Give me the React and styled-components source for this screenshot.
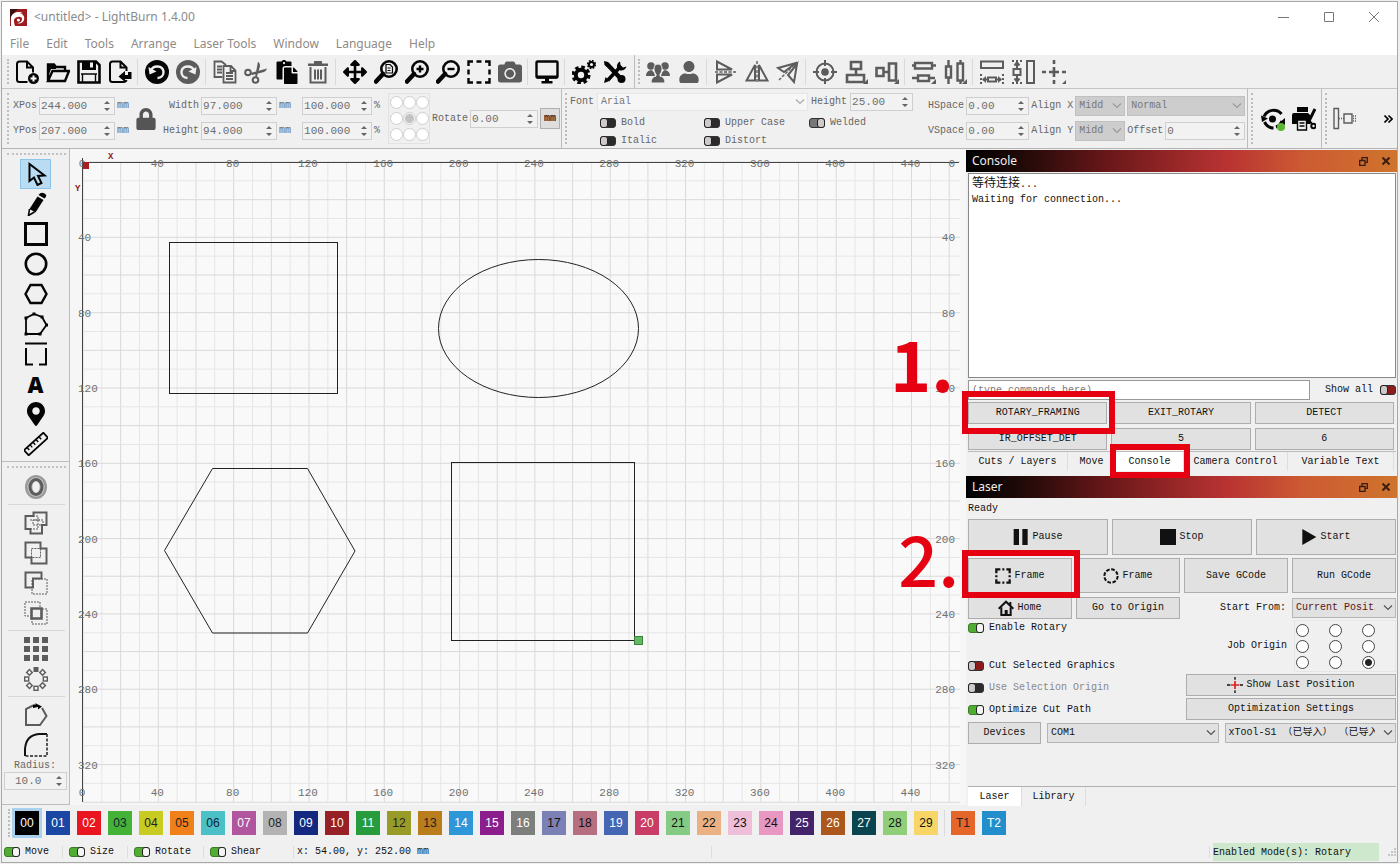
import React from 'react';
import styled, { createGlobalStyle, css } from 'styled-components';
import { FaCamera, FaArrowsAlt, FaUser, FaMapMarkerAlt, FaLock, FaPaste } from 'react-icons/fa';

const GlobalStyle = createGlobalStyle`
  *, *::before, *::after {
    box-sizing: border-box;
  }

  body {
    margin: 0;
    background-color: #f0f0f0;
    font-family: "Liberation Mono", "Noto Sans CJK SC", monospace;
    font-size: 10px;
    line-height: 12px;
    color: #111;
  }

  button, input, select {
    margin: 0;
    font: inherit;
    color: inherit;
  }
`;

const Window = styled.div`
  display: flex;
  flex-direction: column;
  min-height: calc(100vh - 2px);
  margin: 1px 2px 1px 1px;
  border: 1px solid #a8a8a8;
  background-color: #f0f0f0;
`;

/* title bar and menu */

const TitleBar = styled.header`
  display: flex;
  align-items: center;
  gap: 7px;
  height: 32px;
  padding: 0 17px 2px 8px;
  background-color: #fff;
  font-family: "Noto Sans", sans-serif;
  font-size: 12px;
  color: #8a8a8a;
`;

const WindowTitle = styled.h1`
  flex: 1;
  margin: 0;
  font-size: 12px;
  font-weight: 400;
`;

const WindowButtons = styled.div`
  display: flex;
  gap: 33px;
`;

const PlainButton = styled.button`
  display: flex;
  align-items: center;
  justify-content: center;
  padding: 0;
  border: none;
  background: none;
  color: ${({ color }) => color || '#777'};
`;

const MenuBar = styled.nav`
  display: flex;
  gap: 17px;
  height: 21px;
  padding: 0 8px;
  background-color: #fff;
  font-family: "Noto Sans", sans-serif;
  font-size: 12px;
  line-height: 20px;

  a {
    color: #8f8a86;
    text-decoration: none;
  }
`;

/* toolbars */

const Toolbar = styled.div`
  display: flex;
  align-items: center;
  height: 34px;
  padding-left: 5px;
  border-bottom: 1px solid #c4c4c4;
  overflow: hidden;
`;

const Handle = styled.div`
  flex: none;
  align-self: stretch;
  width: 4px;
  margin: 4px 0;
  border-left: 2px dotted #bdbdbd;
`;

const Separator = styled.div`
  flex: none;
  width: 2px;
  height: 26px;
  margin: 0 2px;
  border-left: 1px solid #dadada;
`;

const GroupEnd = styled.div`
  flex: none;
  align-self: stretch;
  width: 4px;
  margin-left: ${({ $before }) => $before || 0}px;
  border-left: 1px solid #bcbcbc;
`;

const ToolButton = styled(PlainButton)`
  flex: none;
  width: 31px;
  height: 30px;
  color: ${({ $dim }) => ($dim ? '#5c5c5c' : '#050505')};

  ${({ $active }) => $active && css`
    background-color: #b9dcf3;
    box-shadow: inset 0 0 0 1px #8cc4ea;
  `}
`;

const LetterIcon = styled.span`
  font-family: "Open Sans", sans-serif;
  font-size: 22px;
  font-weight: 800;
  line-height: 30px;
`;

const PropertyBar = styled.div`
  display: flex;
  align-items: stretch;
  height: 60px;
  padding-left: 5px;
  border-bottom: 1px solid #b4b4b4;
  overflow: hidden;
  color: #666;
`;

const PropertyGroup = styled.div`
  display: flex;
  flex: ${({ $grow }) => ($grow ? '1' : 'none')};
  align-items: center;
  gap: ${({ $gap = 4 }) => $gap}px;
  padding: 0 ${({ $right }) => $right || 0}px 0 ${({ $left }) => $left || 0}px;
`;

const FieldStack = styled.div`
  display: grid;
  grid-template-columns: ${({ $cols }) => $cols || 'auto auto'};
  grid-auto-rows: 18px;
  align-items: center;
  gap: 7px 2px;
`;

const FieldLabel = styled.label`
  text-align: right;
  white-space: pre;
`;

const SpinBox = styled.div`
  display: flex;
  align-items: center;
  width: ${({ $width }) => ($width ? `${$width}px` : '100%')};
  height: 18px;
  padding-right: 3px;
  border: 1px solid #cfcfcf;
  background-color: #f2f2f2;

  input {
    flex: 1;
    min-width: 0;
    width: 10px;
    padding: 0 0 0 1px;
    border: none;
    outline: none;
    background: none;
    font-size: 11px;
    color: #6e6e6e;
  }
`;

const SelectFrame = styled.div`
  position: relative;
  display: flex;
  width: ${({ $width }) => ($width ? `${$width}px` : '100%')};
  height: ${({ $height }) => $height || 20}px;

  select {
    flex: 1;
    min-width: 0;
    padding: 0 20px 0 3px;
    border: 1px solid ${({ $edge }) => $edge || '#b5b5b5'};
    border-radius: 0;
    outline: none;
    appearance: none;
    background-color: ${({ $fill }) => $fill || '#e1e1e1'};
    color: ${({ $ink }) => $ink || '#111'};
  }

  svg {
    position: absolute;
    top: 50%;
    right: 3px;
    margin-top: -3px;
    pointer-events: none;
  }
`;

const ToggleLabel = styled.label`
  display: flex;
  align-items: center;
  gap: 5px;
  height: 12px;
  white-space: pre;
  color: ${({ $ink }) => $ink || '#111'};
`;

const TOGGLE_COLORS = {
  green: '#4fae32',
  red: '#8c1c1c',
  dark: '#2b2b2b',
  gray: '#777',
};

const ToggleInput = styled.input`
  position: relative;
  flex: none;
  width: 16px;
  height: 10px;
  border: 1px solid ${({ $tone }) => ($tone === 'green' ? '#3b7a2b' : '#333')};
  border-radius: 3px;
  appearance: none;
  background-color: ${({ $tone }) => TOGGLE_COLORS[$tone]};

  &::before {
    content: "";
    position: absolute;
    top: -1px;
    left: ${({ $knob }) => ($knob === 'right' ? 7 : -1)}px;
    width: 8px;
    height: 10px;
    border: 1px solid #222;
    border-radius: 3px;
    background-color: ${({ $tone }) => ($tone === 'green' ? '#f4f4f4' : '#cfcaca')};
  }
`;

const AnchorGrid = styled.div`
  display: grid;
  grid-template-columns: repeat(3, 13px);
  gap: 3px 0;
  margin-left: 2px;
  padding: 2px 0 2px 1px;
  border: 1px solid #e2e2e2;
`;

const AnchorRadio = styled.input`
  width: 13px;
  height: 13px;
  margin: 0;
  border: 1px solid #cfcfcf;
  border-radius: 50%;
  appearance: none;
  background-color: #fff;

  &:checked {
    background: radial-gradient(#c2c2c2 0 4px, #f4f4f4 5px);
  }
`;

const UnitButton = styled.button`
  width: 20px;
  height: 21px;
  padding: 0;
  border: 1px solid #b0b0b0;
  background-color: #dedede;
  font-weight: 700;
  font-size: 10px;
  color: #222;
`;

const FontForm = styled.div`
  display: flex;
  flex-direction: column;
  gap: 6px;
  padding-top: 2px;
`;

const FontRow = styled.div`
  display: flex;
  align-items: center;
  gap: 3px;
  height: 18px;
`;

const ToggleGrid = styled.div`
  display: grid;
  grid-template-columns: 104px 105px auto;
  gap: 6px 0;
  padding-left: 30px;
`;

/* workspace */

const Workspace = styled.main`
  display: flex;
  flex: 1;
`;

const ToolColumn = styled.aside`
  display: flex;
  flex: none;
  flex-direction: column;
  width: 68px;
  border-right: 1px solid #bdbdbd;
  border-bottom: 1px solid #bdbdbd;
`;

const ToolSection = styled.section`
  display: flex;
  flex-direction: column;
  align-items: center;
  padding-top: 4px;
  padding-bottom: ${({ $bottom }) => $bottom || 0}px;
  border-bottom: ${({ $bottom }) => ($bottom ? '1px solid #bdbdbd' : 'none')};
`;

const DottedRule = styled.div`
  align-self: stretch;
  margin: 0 3px 4px 5px;
  border-top: 2px dotted #c2c2c2;
`;

const ColumnRule = styled.div`
  align-self: stretch;
  height: 1px;
  margin: 2px 4px 3px 6px;
  background-color: #d8d8d8;
`;

const RadiusField = styled.div`
  display: flex;
  flex-direction: column;
  gap: 1px;
  width: 100%;
  padding: 0 2px;
  color: #666;

  label {
    padding-left: 10px;
    line-height: 11px;
  }

  input {
    padding-left: 10px;
  }
`;

const CanvasArea = styled.div`
  flex: 1;
  min-width: 0;
  overflow: hidden;
  background-color: #f6f6f6;

  svg {
    display: block;
    width: 100%;
    height: 100%;
  }

  text {
    font-family: "Liberation Mono", monospace;
    font-size: 11px;
    fill: #707070;
  }

  .axis {
    font-size: 9px;
    font-weight: 700;
    fill: #8c2020;
  }
`;

/* docks */

const DockColumn = styled.aside`
  display: flex;
  flex: 0 0 431px;
  flex-direction: column;
  padding-top: 1px;
`;

const DockTitle = styled.h2`
  display: flex;
  align-items: center;
  gap: 14px;
  height: 22px;
  margin: 0;
  padding: 0 7px 0 6px;
  background: linear-gradient(90deg, #000 0%, #200a08 13%, #6a1719 33%, #b83232 60%, #cc5a32 78%, #cf742d 100%);
  font-family: "Noto Sans", sans-serif;
  font-size: 12px;
  font-weight: 400;
  color: #eee;

  span {
    flex: 1;
  }
`;

const DockBody = styled.div`
  display: flex;
  flex: ${({ $fill }) => ($fill ? '1' : 'none')};
  flex-direction: column;
  padding: 0 1px 0 2px;
`;

const ConsoleLog = styled.div`
  height: 205px;
  margin: 1px 0 2px;
  padding: 3px;
  border: 1px solid #888;
  background-color: #fff;
  line-height: 15px;

  p {
    margin: 0;
  }

  span {
    font-size: 12px;
  }
`;

const CommandRow = styled.div`
  display: flex;
  align-items: center;
  justify-content: space-between;
  height: 20px;
  margin-bottom: 2px;
`;

const CommandInput = styled.input`
  flex: 0 0 80%;
  height: 20px;
  padding: 0 3px;
  border: 1px solid #999;
  outline: none;
  background-color: #fff;

  &::placeholder {
    color: #777;
    opacity: 1;
  }
`;

const ReverseToggle = styled(ToggleLabel)`
  flex-direction: row-reverse;
  gap: 7px;
`;

const ButtonGrid = styled.div`
  display: grid;
  grid-template-columns: repeat(${({ $cols }) => $cols}, minmax(0, 1fr));
  gap: 4px;
  align-items: center;
  margin-right: ${({ $right }) => $right || 0}px;
  margin-bottom: ${({ $after }) => $after || 4}px;
`;

const PanelButton = styled.button`
  display: flex;
  align-items: center;
  justify-content: center;
  gap: 3px;
  width: 100%;
  height: ${({ $height }) => $height || 22}px;
  padding: 0;
  border: 1px solid #adadad;
  background-color: #e1e1e1;
  white-space: pre;
`;

const Marked = styled.div`
  position: relative;

  &::after {
    content: "";
    position: absolute;
    z-index: 2;
    inset: ${({ $inset }) => $inset};
    border: 6px solid #e50012;
    pointer-events: none;
  }
`;

const StepNumber = styled.strong`
  position: absolute;
  z-index: 2;
  top: ${({ $top }) => $top}px;
  right: 100%;
  padding-right: ${({ $space }) => $space}px;
  font-family: "Noto Sans CJK SC", sans-serif;
  font-size: 70px;
  font-weight: ${({ $weight }) => $weight};
  line-height: 70px;
  color: #e50012;
`;

const TabRow = styled.div`
  display: flex;
  height: 20px;
  margin-bottom: 5px;
  border-top: 1px solid #bbb;
`;

const TabButton = styled.button`
  width: ${({ $width }) => $width || '100%'};
  height: 19px;
  padding: 0;
  border: none;
  border-right: 1px solid #ddd;
  background-color: ${({ $active }) => ($active ? '#fff' : 'transparent')};
  white-space: pre;
`;

const TabSlot = styled(Marked)`
  flex: none;
  width: 68px;
`;

const Ready = styled.p`
  margin: 5px 0 4px;
`;

const AlignRight = styled.label`
  grid-column: 3;
  padding-right: 2px;
  text-align: right;
`;

const LaserOptions = styled.div`
  display: flex;
  justify-content: space-between;
  margin-bottom: 2px;
`;

const OptionList = styled.div`
  display: flex;
  flex-direction: column;
  gap: 10px;
  padding-top: 2px;

  label:nth-child(2) {
    margin-top: 16px;
  }
`;

const OptionSide = styled.div`
  display: flex;
  flex-direction: column;
  gap: 2px;
  width: 210px;
`;

const JobOrigin = styled.fieldset`
  display: flex;
  align-items: center;
  justify-content: flex-end;
  gap: 7px;
  margin: 0;
  padding: 0;
  border: none;
`;

const JobOriginGrid = styled.div`
  display: grid;
  grid-template-columns: repeat(3, 33px);
  gap: 3px 0;
  padding: 3px 0 2px 1px;
  border: 1px solid #e6e6e6;
`;

const JobRadio = styled.input`
  width: 13px;
  height: 13px;
  border: 1px solid #444;
  border-radius: 50%;
  appearance: none;
  background-color: #fff;

  &:checked {
    background: radial-gradient(#222 0 3px, #fff 4px);
  }
`;

const DeviceRow = styled.div`
  display: grid;
  grid-template-columns: 73px minmax(0, 1fr) minmax(0, 1fr);
  gap: 6px;
  align-items: center;
`;

const BottomTabs = styled.div`
  display: flex;
  height: 19px;
  margin-top: auto;
  border-top: 1px solid #b0b0b0;
`;

/* palette and status */

const Palette = styled.div`
  display: flex;
  align-items: center;
  height: 36px;
  padding-left: 6px;
`;

const Swatch = styled.button`
  flex: none;
  width: 24px;
  height: 24px;
  margin: 0 4px 0 3px;
  padding: 0;
  border: none;
  outline: ${({ $active }) => ($active ? '3px solid #a9d1ee' : 'none')};
  background-color: ${({ $fill }) => $fill};
  font-family: "Liberation Sans", sans-serif;
  font-size: 12px;
  color: ${({ $ink }) => $ink || '#fff'};
`;

const StatusBar = styled.footer`
  display: flex;
  align-items: center;
  height: 21px;
  padding-left: 2px;
`;

const StatusCell = styled.div`
  flex: ${({ $grow }) => ($grow ? '1' : 'none')};
  width: ${({ $width }) => ($width ? `${$width}px` : 'auto')};
  margin-right: ${({ $after = 6 }) => $after}px;
  border-right: 1px solid #ddd;
  white-space: pre;
`;

const ModeBadge = styled.span`
  width: 166px;
  height: 18px;
  margin-right: 8px;
  background-color: #cde8cc;
  line-height: 20px;
  white-space: pre;
`;

/* drawings */

const line = { fill: 'none', stroke: 'currentColor', strokeWidth: 2 };
const thin = { fill: 'none', stroke: 'currentColor', strokeWidth: 1.4 };
const bold = { fill: 'none', stroke: 'currentColor', strokeWidth: 3 };

const DRAWINGS = {
  newFile: (
    <>
      <path {...line} d="M12.500 22H4.500Q2 22 2 19.500V4Q2 1.500 4.500 1.500H12l6 6V12.500M12 1.500v6h6" />
      <circle cx="18.500" cy="18.500" r="5.500" fill="currentColor" />
      <path d="M18.500 15.500v6M15.500 18.500h6" stroke="#fff" strokeWidth="2" />
    </>
  ),
  open: (
    <>
      <path {...line} d="M2 20V4.500h6l2 2.500h9v4M2 21l4.500-10H23l-4 10z" strokeWidth="2.400" />
      <path d="M1 4h7l2 2v3H5L1.500 18z" fill="currentColor" />
    </>
  ),
  save: (
    <>
      <path {...line} d="M1.500 1.500h17.500l3.500 3.500v17.500h-21z" strokeWidth="2.600" />
      <path d="M5 1h14v9H5z" fill="currentColor" />
      <path d="M13 2.500h3v5h-3z" fill="#f0f0f0" />
      <path {...thin} d="M4 14h16M5.500 22v-8M18.500 22v-8" />
    </>
  ),
  importFile: (
    <>
      <path {...line} d="M18.500 11V7.500l-6-6H4.500Q2 1.500 2 4v15.500Q2 22 4.500 22h11Q18 22 18.500 20M12.500 1.500v6h6" />
      <path d="M10.500 16.500 17 11v4h3v-3h3.500v7H17v3z" fill="currentColor" />
    </>
  ),
  undo: (
    <>
      <circle cx="12" cy="12" r="12" fill="currentColor" />
      <path d="M6 10.500C8 5 17.500 5 18.500 11.500c.5 4-2.500 6.500-6 6.500" fill="none" stroke="#f0f0f0" strokeWidth="2.400" />
      <path d="M3.500 7 4.500 14.500l7-3z" fill="#f0f0f0" />
    </>
  ),
  redo: (
    <>
      <circle cx="12" cy="12" r="12" fill="currentColor" />
      <path d="M18 10.500C16 5 6.500 5 5.500 11.500c-.5 4 2.500 6.500 6 6.500" fill="none" stroke="#f0f0f0" strokeWidth="2.400" />
      <path d="M20.500 7 19.500 14.500l-7-3z" fill="#f0f0f0" />
    </>
  ),
  copy: (
    <>
      <path {...thin} strokeWidth="1.800" d="M9.500 17H1.500V1.500h7L13 5M4 6.500h5M4 9.500h5M4 12.500h5" />
      <path {...thin} strokeWidth="1.800" d="M10.500 6h7.500l4.500 4.500V22.500h-12zM17.500 6v5h5M13 13h7M13 16h7M13 19h7" />
    </>
  ),
  cut: (
    <>
      <circle {...line} cx="4" cy="12.500" r="2.800" />
      <circle {...line} cx="11.500" cy="20" r="2.800" />
      <path d="M6.500 13 23 8.500q-1 3.500-5 4L8 15zM11 17.500 14 1.500q3 3 1.500 6.500l-3 10z" fill="currentColor" />
    </>
  ),
  trash: (
    <>
      <path d="M2 3.500h20v2.500H2zM8 1h8v3H8z" fill="currentColor" />
      <path {...line} d="M4.500 7v15.500h15V7M9 9.500v10M12 9.500v10M15 9.500v10" />
    </>
  ),
  zoomPage: (
    <>
      <circle {...line} cx="15" cy="9" r="7.700" strokeWidth="2.600" />
      <path d="M9 14 2 21.500" stroke="currentColor" strokeWidth="4.500" strokeLinecap="round" />
      <path {...thin} strokeWidth="1.200" d="M12 4.500h4l2.500 2.500v6H12zM13.500 8h3M13.500 10.500h3" />
    </>
  ),
  zoomIn: (
    <>
      <circle {...line} cx="15" cy="9" r="7.700" strokeWidth="2.600" />
      <path d="M9 14 2 21.500" stroke="currentColor" strokeWidth="4.500" strokeLinecap="round" />
      <path {...line} d="M15 5.500v7M11.500 9h7" strokeWidth="2.400" />
    </>
  ),
  zoomOut: (
    <>
      <circle {...line} cx="15" cy="9" r="7.700" strokeWidth="2.600" />
      <path d="M9 14 2 21.500" stroke="currentColor" strokeWidth="4.500" strokeLinecap="round" />
      <path {...line} d="M11.500 9h7" strokeWidth="2.400" />
    </>
  ),
  frame: <path {...line} strokeWidth="2.400" d="M1.500 6V1.500H6M9.500 1.500h5M18 1.500h4.500V6M22.500 9.500v5M22.500 18v4.500H18M14.500 22.500h-5M6 22.500H1.500V18M1.500 14.500v-5" />,
  monitor: (
    <>
      <rect {...line} x="1.500" y="1.500" width="21" height="16" rx="1" strokeWidth="2.400" />
      <path d="M2 15.500h20v3H2zM10 18h4v3h3.500v2.500h-11V21H10z" fill="currentColor" />
    </>
  ),
  gears: (
    <>
      <circle {...line} cx="9" cy="15" r="5.200" strokeWidth="4" />
      <circle cx="9" cy="15" r="8" fill="none" stroke="currentColor" strokeWidth="3" strokeDasharray="3.600 2.680" />
      <circle {...line} cx="19.500" cy="4.500" r="2.600" />
      <circle cx="19.500" cy="4.500" r="3.900" fill="none" stroke="currentColor" strokeWidth="1.500" strokeDasharray="1.700 1.360" />
    </>
  ),
  tools: (
    <>
      <path d="M4.500 4.500 19 20" stroke="currentColor" strokeWidth="4.400" strokeLinecap="round" />
      <path d="M18 6 5 20" stroke="currentColor" strokeWidth="3.600" />
      <path d="M17 1.500a6 6 0 0 0-3 6l3 3a6 6 0 0 0 6.500-4L20 7.500 17.500 5z" fill="currentColor" />
      <path d="M1 1l4 1 3 5-2 1.500L1.500 5zM1 23l1.500-6 4 4z" fill="currentColor" />
      <circle cx="18.500" cy="19" r="4" fill="currentColor" />
    </>
  ),
  users: (
    <>
      <circle cx="5" cy="6" r="3.800" fill="currentColor" />
      <circle cx="19" cy="6" r="3.800" fill="currentColor" />
      <path d="M0 16q0-5 5-6 3 1 4 6zM24 16q0-5-5-6-3 1-4 6z" fill="currentColor" />
      <path d="M12 4c-6 0-4 9-2 10v2q-5 1-5 7h14q0-6-5-7v-2c2-1 4-10-2-10z" fill="currentColor" stroke="#f0f0f0" />
    </>
  ),
  flipV: (
    <>
      <path {...line} d="M3 1.500v8h15zM3 14.500v8l15-8z" />
      <path {...thin} d="M1 12h22" strokeDasharray="3 1.500" />
    </>
  ),
  flipH: (
    <>
      <path {...line} d="M1.500 20.500H10V5zM14 20.500h8.500L14 5z" />
      <path {...thin} d="M12 1v22" strokeDasharray="3 1.500" />
    </>
  ),
  flipLine: (
    <>
      <path {...line} d="M2 8 20 3 8 12zM21 4 18 22l-6-7z" />
      <path {...thin} d="M3 20 22 1" strokeDasharray="3 1.500" />
    </>
  ),
  target: (
    <>
      <circle {...line} cx="12" cy="12" r="8.500" />
      <circle cx="12" cy="12" r="3.800" fill="currentColor" />
      <path {...line} d="M12 0v6M12 18v6M0 12h6M18 12h6" />
    </>
  ),
  alignV: (
    <>
      <path {...line} strokeWidth="2.600" d="M7 2h10v7H7zM12 9v6M3 15h17v7H3z" />
      <path d="M19 24h5v-5z" fill="currentColor" />
    </>
  ),
  alignH: (
    <>
      <path {...line} strokeWidth="2.600" d="M1.500 8h7v8h-7zM9 12h5M14 3.500h7v17h-7z" />
      <path d="M19 24h5v-5z" fill="currentColor" />
    </>
  ),
  spreadV: (
    <>
      <path {...line} strokeWidth="2.400" d="M3 3h17v5.500H3zM0 5.500h3M20 5.500h4M6 15.500h11V21H6zM0 18h6M17 18h6" />
      <path d="M19 24h5v-5z" fill="currentColor" />
    </>
  ),
  spreadH: (
    <>
      <path {...line} strokeWidth="2.400" d="M3 6.500h5v11H3zM5.500 0v6M5.500 18v6M14.500 3.500H20v17h-5.500zM17.500 0v3M17.500 21v3" />
      <path d="M19 24h5v-5z" fill="currentColor" />
    </>
  ),
  sameWidth: (
    <>
      <path {...line} d="M1 1.500h22V8H1z" />
      <path {...line} d="M8 17.500h8v4H8zM3 19.500h5M16 19.500h5" />
      <path d="M2 19.500 6 16v7zM22 19.500 18 16v7z" fill="currentColor" />
      <path {...line} d="M1 14v10M23 14v10" strokeDasharray="2 2" />
    </>
  ),
  sameHeight: (
    <>
      <path {...line} d="M16 1h7v22h-7zM2.500 9h7v6h-7zM6 4v5M6 15v5M3.500 5.500 6 2.500l2.500 3M3.500 18.500l2.500 3 2.500-3" />
      <path {...line} d="M1 1h10M1 23h10" strokeDasharray="2 2" />
    </>
  ),
  crosshair: (
    <>
      <path {...line} strokeWidth="2.600" d="M0 12h4M7 12h10M20 12h4M12 0v4M12 7v10M12 20v4" />
      <path d="M20 24h4v-4z" fill="currentColor" />
    </>
  ),
  pointer: <path {...line} d="M5.500 2v17l4.500-3.500 3.500 7.500 4-2-3.500-7 6.500-.5z" />,
  pencil: (
    <>
      <path d="M13.500 4.500 19.500 8 11.500 20.500 5.500 17z" fill="currentColor" />
      <path d="M14.500 3Q17-.500 20.500 1.500T20.500 6.500z" fill="currentColor" />
      <path {...thin} d="M5.500 17 4.500 23.500 10.500 20" strokeWidth="1.600" />
    </>
  ),
  square: <rect {...bold} x="1.500" y="1.500" width="21" height="21" />,
  circle: <circle {...bold} cx="12" cy="12" r="10.200" strokeWidth="2.600" />,
  hexagon: <path {...line} strokeWidth="2.400" d="M1.500 12 6.500 3h11l5 9-5 9h-11z" />,
  polygon: (
    <>
      <path {...line} strokeWidth="1.800" d="M2 22V6l8-4 8 3 4.500 8L16 22z" />
      <path d="M.500 4.500h3v3h-3zM8.500.500h3v3h-3zM16.500 3.500h3v3h-3zM21 11.500h3v3h-3zM14.500 20.500h3v3h-3zM.500 20.500h3v3h-3z" fill="currentColor" />
    </>
  ),
  textFrame: <path {...line} d="M1 1.500h22M2 6v16.500h7M15 22.500h7V6" />,
  ruler: (
    <g transform="rotate(-42 12 12)">
      <rect {...line} x="-1" y="8.500" width="26" height="7" strokeWidth="1.800" />
      <path {...thin} d="M3 9v3M7 9v3M11 9v3M15 9v3M19 9v3" />
    </g>
  ),
  offset: (
    <>
      <ellipse cx="12" cy="12" rx="11" ry="12" fill="#999" />
      <ellipse cx="12" cy="12" rx="8.800" ry="10" fill="#bdbdbd" />
      <ellipse cx="12" cy="12" rx="6" ry="7.500" fill="none" stroke="currentColor" strokeWidth="3" />
      <ellipse cx="12" cy="12" rx="3.500" ry="5.500" fill="#f0f0f0" />
    </>
  ),
  weld: (
    <>
      <path {...line} d="M1.500 5h8V1.500h13V14H18v8.500H6.500V18h-5z" />
      <path {...thin} strokeWidth="1" strokeDasharray="2 1" d="M9 5h5v13H7M17 14h-8V9h10v5M6 9h10" />
    </>
  ),
  union: (
    <>
      <path {...line} d="M1.500 1.500h15v6h6v15h-15v-6h-6z" />
      <path {...thin} strokeWidth="1" strokeDasharray="2 1" d="M7.500 16.500v-9h9v9z" />
    </>
  ),
  subtract: (
    <>
      <path {...line} d="M1.500 1.500h16v6H9v9H1.500z" />
      <path {...thin} strokeWidth="1" strokeDasharray="2 1" d="M8 8h15v15H8z" />
    </>
  ),
  intersect: (
    <>
      <path {...line} strokeWidth="2.600" d="M7.500 7.500h10v10h-10z" />
      <path {...thin} strokeWidth="1" strokeDasharray="2 1" d="M16 6V1H1v14h5M18 8h5v15H8v-5" />
    </>
  ),
  gridArray: <path fill="currentColor" d="M0 0h6v6H0zM9 0h6v6H9zM18 0h6v6h-6zM0 9h6v6H0zM9 9h6v6H9zM18 9h6v6h-6zM0 18h6v6H0zM9 18h6v6H9zM18 18h6v6h-6z" />,
  radialArray: (
    <>
      {[45, 90, 135, 180, 225, 270, 315].map((angle) => (
        <rect key={angle} {...thin} x="10" y="0.700" width="4" height="4" transform={`rotate(${angle} 12 12)`} />
      ))}
      <path d="M9.500 0h5v5h-5z" fill="currentColor" />
    </>
  ),
  startPoint: (
    <>
      <path {...line} d="M9 2.500 2 6v16h14l6.500-9L18 5" />
      <path d="M9 1.500h3L11 0l7 3.500-4 3v-2.500l-5 1z" fill="#000" />
    </>
  ),
  fillet: (
    <>
      <path d="M1 23V16Q2 2 15 1h8" fill="none" stroke="#111" strokeWidth="2" />
      <path d="M23 1v22H1" fill="none" stroke="#222" strokeWidth="1.500" strokeDasharray="3 1.500" />
    </>
  ),
  refresh: (
    <>
      <path {...bold} d="M3 9.500C6 2 16 1.500 20.500 7M21 14c-1 3-3 5-6 6M3.500 15c2 4 5 6 9 6" />
      <path d="M0 8.500 1 15l6-3.500zM24 11v7l-6-2z" fill="currentColor" />
      <circle cx="11.500" cy="12" r="3.500" fill="currentColor" />
      <circle cx="20" cy="20" r="4" fill="#5bb531" />
    </>
  ),
  printCut: (
    <>
      <path d="M5 0h11v5H5zM0 8q0-2 2-2h14l2 2v9H0z" fill="currentColor" />
      <path d="M5.500 13h9v10h-9z" fill="#f0f0f0" stroke="currentColor" strokeWidth="1.400" />
      <path {...thin} d="M7.500 16h5M7.500 19h5" />
      <path {...line} d="M23 2 17 14" strokeWidth="3" />
      <circle {...line} cx="21.500" cy="19" r="2.200" />
      <path {...line} d="M15 11l5 6" />
    </>
  ),
  dockAlign: (
    <>
      <path {...thin} d="M1 1.500h4.500v20H1zM11 7h8v9h-8z" />
      <path {...thin} strokeDasharray="1 1" d="M6 11.500h5M20 9h3M20 11.500h3M20 14h3" />
    </>
  ),
  frameCircle: <circle {...line} cx="12" cy="12" r="10" strokeWidth="3" strokeDasharray="5.500 2.350" />,
  frameSmall: <path {...line} strokeWidth="3.400" d="M2 8V2h6M11 2h3M17 2h5v6M22 11v3M22 17v5h-5M14 22h-3M8 22H2v-5M2 14v-3" />,
  home: (
    <>
      <path {...bold} d="M1 13 12 2.500 23 13M18.500 3v5" />
      <path {...bold} d="M5 11v11.500h14V11" />
      <path d="M10 15h4.500v8H10z" fill="currentColor" />
    </>
  ),
  pause: <path d="M1 0h8v24H1zM14 0h8v24h-8z" fill="currentColor" />,
  stop: <path d="M0 0h24v24H0z" fill="currentColor" />,
  play: <path d="M2 0 23 12 2 24z" fill="currentColor" />,
  lastPosition: (
    <>
      <path {...line} d="M0 12h5M19 12h5M12 0v4M12 20v4" />
      <path d="M6 12h12M12 6v12" stroke="#e02020" strokeWidth="2.600" />
    </>
  ),
};

const Icon = ({ name, size = 24 }) => (
  <svg width={size} height={size} viewBox="0 0 24 24" aria-hidden="true">{DRAWINGS[name]}</svg>
);

const Logo = () => (
  <svg width="17" height="17" viewBox="0 0 17 17" aria-hidden="true">
    <path d="M0 0h17v17H0z" fill="#9c1c20" />
    <path d="M0 0h8L3 5 0 10z" fill="#3a1012" />
    <path d="M1 8C3 3 8 2 13 4l-3 .5c3 .5 5 3 4 6.500-1 3-4 4-7 3 3 0 5-1.500 5-4S9 7 6 8.500 4 13 5 17H1z" fill="#fff" />
    <path d="M7 10q3-1 3 1.500Q9 13 7 12z" fill="#fff" />
  </svg>
);

const ResizeGrip = () => (
  <svg width="10" height="10" viewBox="0 0 10 10" aria-hidden="true">
    <path d="M7 1h2v2H7zM4 4h2v2H4zM7 4h2v2H7zM1 7h2v2H1zM4 7h2v2H4zM7 7h2v2H7z" fill="#c4c4c4" />
  </svg>
);

const Chevron = ({ color = '#555' }) => (
  <svg width="10" height="6" viewBox="0 0 10 6" aria-hidden="true">
    <path d="M1 .500 5 4.500 9 .500" fill="none" stroke={color} strokeWidth="1.200" />
  </svg>
);

const Spin = ({ id, value, width }) => (
  <SpinBox $width={width}>
    <input id={id} defaultValue={value} aria-label={id} />
    <svg width="8" height="12" viewBox="0 0 8 12" aria-hidden="true">
      <path d="M1 4 4 1l3 3zM1 8l3 3 3-3z" fill="#666" />
    </svg>
  </SpinBox>
);

const Select = ({ id, options, chevron, ...frame }) => (
  <SelectFrame {...frame}>
    <select id={id} aria-label={id}>
      {options.map((option) => <option key={option}>{option}</option>)}
    </select>
    <Chevron color={chevron} />
  </SelectFrame>
);

const Toggle = ({ text, tone = 'dark', knob = 'left', ink }) => (
  <ToggleLabel $ink={ink}>
    <ToggleInput type="checkbox" role="switch" $tone={tone} $knob={knob} defaultChecked={knob === 'right'} />
    {text}
  </ToggleLabel>
);

const DockHeader = ({ title }) => (
  <DockTitle>
    <span>{title}</span>
    <PlainButton aria-label={`Float ${title}`} color="#3a1d12">
      <svg width="9" height="9" viewBox="0 0 9 9">
        <path d="M3 3V.700h5.300v4.600H6M.700 3.500H6v4.800H.700z" fill="none" stroke="currentColor" strokeWidth="1.300" />
      </svg>
    </PlainButton>
    <PlainButton aria-label={`Close ${title}`} color="#3a1d12">
      <svg width="8" height="8" viewBox="0 0 8 8">
        <path d="M.500.500l7 7M7.500.500l-7 7" stroke="currentColor" strokeWidth="2" />
      </svg>
    </PlainButton>
  </DockTitle>
);

const MENUS = ['File', 'Edit', 'Tools', 'Arrange', 'Laser Tools', 'Window', 'Language', 'Help'];

const MAIN_TOOLS = [
  ['newFile', 'open', 'save', 'importFile'],
  ['undo', 'redo'],
  ['copy', 'cut', 'paste', 'trash'],
  ['move', 'zoomPage', 'zoomIn', 'zoomOut', 'frame', 'camera'],
  ['monitor'],
  ['gears', 'tools'],
];

const ARRANGE_TOOLS = [
  ['users', 'user'],
  ['flipV', 'flipH', 'flipLine'],
  ['target', 'alignV', 'alignH'],
  ['spreadV', 'spreadH'],
  ['sameWidth', 'sameHeight', 'crosshair'],
];

const PACKAGE_ICONS = {
  paste: <FaPaste size={24} />,
  move: <FaArrowsAlt size={24} />,
  camera: <FaCamera size={24} />,
  user: <FaUser size={22} />,
};

const DIMMED = ['redo', 'copy', 'cut', 'trash', 'camera'];

const DRAW_TOOLS = ['pointer', 'pencil', 'square', 'circle', 'hexagon', 'polygon', 'textFrame', 'text', 'marker', 'ruler'];

const PALETTE = [
  ['#000'], ['#1a47a4'], ['#e9151f'], ['#44b236', '#123'], ['#c8cb21', '#222'], ['#f08019', '#222'],
  ['#4bc0c7', '#123'], ['#b0559e'], ['#b3b3b3', '#222'], ['#15287f'], ['#962025'], ['#269c3d'],
  ['#999b28', '#222'], ['#b97d1c', '#222'], ['#2e97d8'], ['#8c1d8c'], ['#7d7f7d'], ['#7b80b5', '#111'],
  ['#b56f80', '#111'], ['#4566b3'], ['#c93c66'], ['#86cb85', '#111'], ['#e9b184', '#111'], ['#efbfd9', '#111'],
  ['#e897c2', '#111'], ['#43246b'], ['#ac581d'], ['#0a454f'], ['#90ce79', '#111'], ['#f7d667', '#111'],
];

const ToolGroups = ({ groups, isDim }) => groups.map((group, index) => (
  <React.Fragment key={group[0]}>
    {index > 0 && <Separator />}
    {group.map((name) => (
      <ToolButton key={name} aria-label={name} $dim={isDim(name)}>
        {PACKAGE_ICONS[name] || <Icon name={name} />}
      </ToolButton>
    ))}
  </React.Fragment>
));

// one grid cell is 10 mm, rulers are labelled every 40 mm
const CELL = 18.83;
const ORIGIN = 13;

const Canvas = () => {
  const columns = Array.from({ length: 47 }, (_, i) => ORIGIN + i * CELL);
  const rows = Array.from({ length: 35 }, (_, i) => ORIGIN + i * CELL);

  return (
    <CanvasArea>
      <svg role="img" aria-label="Work area">
        <rect x={ORIGIN} y={ORIGIN} width="877" height="640" fill="#f9f9f9" />
        {columns.map((x, i) => (
          <path key={x} d={`M${x} ${ORIGIN}V653`} stroke={i % 2 ? '#e6e6e6' : '#d9d9d9'} />
        ))}
        {rows.map((y, i) => (
          <path key={y} d={`M${ORIGIN} ${y}H890`} stroke={i % 2 ? '#e6e6e6' : '#d9d9d9'} />
        ))}
        <path d={`M${ORIGIN - 1} 13.500H889M${ORIGIN - 0.5} 9V653`} fill="none" stroke="#444" />
        {columns.filter((_, i) => i % 4 === 0).map((x, i) => (
          <React.Fragment key={x}>
            <text x={x - 1} y="18" textAnchor="middle">{i * 40}</text>
            <text x={x - 1} y="647" textAnchor="middle">{i * 40}</text>
          </React.Fragment>
        ))}
        {rows.filter((_, i) => i % 4 === 0).map((y, i) => (
          <React.Fragment key={y}>
            {i > 0 && <text x="8" y={y + 4}>{i * 40}</text>}
            <text x="885" y={i ? y + 4 : y + 5} textAnchor="end">{i * 40}</text>
          </React.Fragment>
        ))}
        <text className="axis" x="38" y="10">X</text>
        <text className="axis" x="5" y="42">Y</text>
        <rect x="13" y="13" width="6" height="7" fill="#a81c22" />
        <g fill="none" stroke="#222">
          <rect x="99.500" y="93.500" width="168" height="151" />
          <ellipse cx="468.500" cy="179.500" rx="100" ry="69" />
          <path d="M94.500 401.500 142.500 319.500H237.500L285 402 237.500 484H142.500z" />
          <rect x="381.500" y="313.500" width="183" height="178" />
        </g>
        <rect x="564.500" y="487.500" width="8" height="8" fill="#66b866" stroke="#37843b" />
      </svg>
    </CanvasArea>
  );
};

const columnIcon = (name) => {
  if (name === 'marker') return <FaMapMarkerAlt size={24} />;
  if (name === 'text') return <LetterIcon>A</LetterIcon>;
  return <Icon name={name} />;
};

const ToolStrip = () => (
  <ToolColumn>
    <ToolSection $bottom={2}>
      <DottedRule />
      {DRAW_TOOLS.map((name) => (
        <ToolButton key={name} aria-label={name} $active={name === 'pointer'}>{columnIcon(name)}</ToolButton>
      ))}
    </ToolSection>
    <ToolSection>
      <DottedRule />
      {[['offset'], ['weld', 'union', 'subtract', 'intersect'], ['gridArray', 'radialArray'], ['startPoint', 'fillet']].map((group, index) => (
        <React.Fragment key={group[0]}>
          {index > 0 && <ColumnRule />}
          {group.map((name) => (
            <ToolButton key={name} aria-label={name} $dim>{columnIcon(name)}</ToolButton>
          ))}
        </React.Fragment>
      ))}
      <RadiusField>
        <label htmlFor="radius">Radius:</label>
        <Spin id="radius" value="10.0" />
      </RadiusField>
    </ToolSection>
  </ToolColumn>
);

const Properties = () => (
  <PropertyBar>
    <Handle />
    <PropertyGroup $left={2} $right={1} $gap={6}>
      <FieldStack $cols="auto 76px auto">
        <FieldLabel htmlFor="xpos">XPos</FieldLabel><Spin id="xpos" value="244.000" /><span>mm</span>
        <FieldLabel htmlFor="ypos">YPos</FieldLabel><Spin id="ypos" value="207.000" /><span>mm</span>
      </FieldStack>
      <FaLock size={22} color="#555" />
      <FieldStack $cols="auto 76px 21px 70px auto">
        <FieldLabel htmlFor="width">Width</FieldLabel><Spin id="width" value="97.000" /><span>mm</span>
        <Spin id="width percent" value="100.000" /><span>%</span>
        <FieldLabel htmlFor="height">Height</FieldLabel><Spin id="height" value="94.000" /><span>mm</span>
        <Spin id="height percent" value="100.000" /><span>%</span>
      </FieldStack>
      <PropertyGroup $gap={2}>
        <AnchorGrid>
          {Array.from({ length: 9 }, (_, i) => (
            <AnchorRadio key={i} type="radio" name="anchor" aria-label={`Anchor ${i + 1}`} defaultChecked={i === 4} />
          ))}
        </AnchorGrid>
        <FieldLabel htmlFor="rotate">Rotate</FieldLabel>
        <Spin id="rotate" value="0.00" width={68} />
        <UnitButton>mm</UnitButton>
      </PropertyGroup>
    </PropertyGroup>
    <GroupEnd />
    <Handle />
    <PropertyGroup $left={1}>
      <FontForm>
        <FontRow>
          <FieldLabel htmlFor="font">Font</FieldLabel>
          <Select id="font" options={['Arial']} $width={211} $height={18} $fill="#f6f6f6" $edge="#e6e6e6" $ink="#777" chevron="#aaa" />
          <FieldLabel htmlFor="font-height">Height</FieldLabel>
          <Spin id="font-height" value="25.00" width={63} />
        </FontRow>
        <ToggleGrid>
          <Toggle text="Bold" ink="#666" />
          <Toggle text="Upper Case" ink="#666" />
          <Toggle text="Welded" tone="gray" knob="right" ink="#666" />
          <Toggle text="Italic" ink="#666" />
          <Toggle text="Distort" ink="#666" />
        </ToggleGrid>
      </FontForm>
    </PropertyGroup>
    <PropertyGroup $left={15} $right={2}>
      <FieldStack $cols="auto 63px auto 50px 118px">
        <FieldLabel htmlFor="hspace">HSpace</FieldLabel>
        <Spin id="hspace" value="0.00" />
        <FieldLabel htmlFor="Align X">Align X</FieldLabel>
        <Select id="Align X" options={['Middle']} $fill="#cdcdcd" $edge="#c0c0c0" $ink="#777" chevron="#999" />
        <Select id="Path mode" options={['Normal']} $fill="#cdcdcd" $edge="#c0c0c0" $ink="#777" chevron="#999" />
        <FieldLabel htmlFor="vspace">VSpace</FieldLabel>
        <Spin id="vspace" value="0.00" />
        <FieldLabel htmlFor="Align Y">Align Y</FieldLabel>
        <Select id="Align Y" options={['Middle']} $fill="#cdcdcd" $edge="#c0c0c0" $ink="#777" chevron="#999" />
        <PropertyGroup $gap={2}>
          <FieldLabel htmlFor="offset">Offset</FieldLabel>
          <Spin id="offset" value="0" width={80} />
        </PropertyGroup>
      </FieldStack>
    </PropertyGroup>
    <GroupEnd />
    <Handle />
    <PropertyGroup $gap={0} $left={2} $right={2}>
      <ToolButton aria-label="refresh"><Icon name="refresh" /></ToolButton>
      <ToolButton aria-label="print and cut"><Icon name="printCut" /></ToolButton>
    </PropertyGroup>
    <GroupEnd />
    <Handle />
    <PropertyGroup $grow $gap={0}>
      <ToolButton aria-label="dock align" $dim><Icon name="dockAlign" /></ToolButton>
      <PropertyGroup $left={24}>
        <PlainButton aria-label="More" color="#000">
          <svg width="9" height="8" viewBox="0 0 9 8">
            <path d="M.500.500 4 4 .500 7.500M4.500.500 8 4 4.500 7.500" fill="none" stroke="currentColor" strokeWidth="1.600" />
          </svg>
        </PlainButton>
      </PropertyGroup>
    </PropertyGroup>
  </PropertyBar>
);

const ConsoleDock = () => (
  <section>
    <DockHeader title="Console" />
    <DockBody>
      <ConsoleLog>
        <p><span>等待连接</span>...</p>
        <p>Waiting for connection...</p>
      </ConsoleLog>
      <CommandRow>
        <CommandInput placeholder="(type commands here)" aria-label="Console command" />
        <ReverseToggle>
          <ToggleInput type="checkbox" role="switch" $tone="red" $knob="left" />
          Show all
        </ReverseToggle>
      </CommandRow>
      <ButtonGrid $cols={3} $after={1} $right={2}>
        <Marked $inset="-11px -8px -10px -6px">
          <StepNumber $top={-75} $weight={700} $space={14}>1.</StepNumber>
          <PanelButton>ROTARY_FRAMING</PanelButton>
        </Marked>
        <PanelButton>EXIT_ROTARY</PanelButton>
        <PanelButton>DETECT</PanelButton>
        <PanelButton>IR_OFFSET_DET</PanelButton>
        <PanelButton>5</PanelButton>
        <PanelButton>6</PanelButton>
      </ButtonGrid>
      <TabRow>
        <TabButton $width="100px">Cuts / Layers</TabButton>
        <TabButton $width="48px">Move</TabButton>
        <TabSlot $inset="-8px -6px -7px -6px">
          <TabButton $active>Console</TabButton>
        </TabSlot>
        <TabButton $width="104px">Camera Control</TabButton>
        <TabButton $width="106px">Variable Text</TabButton>
      </TabRow>
    </DockBody>
  </section>
);

const LaserDock = () => (
  <>
    <DockHeader title="Laser" />
    <DockBody $fill>
      <Ready>Ready</Ready>
      <ButtonGrid $cols={3} $after={3}>
        <PanelButton $height={36}><Icon name="pause" size={16} />Pause</PanelButton>
        <PanelButton $height={36}><Icon name="stop" size={16} />Stop</PanelButton>
        <PanelButton $height={36}><Icon name="play" size={16} />Start</PanelButton>
      </ButtonGrid>
      <ButtonGrid $cols={4}>
        <Marked $inset="-8px -8px -5px -6px">
          <StepNumber $top={-36} $weight={500} $space={9}>2.</StepNumber>
          <PanelButton $height={35}><Icon name="frameSmall" size={16} />Frame</PanelButton>
        </Marked>
        <PanelButton $height={35}><Icon name="frameCircle" size={16} />Frame</PanelButton>
        <PanelButton $height={35}>Save GCode</PanelButton>
        <PanelButton $height={35}>Run GCode</PanelButton>
      </ButtonGrid>
      <ButtonGrid $cols={4} $after={1}>
        <PanelButton><Icon name="home" size={16} />Home</PanelButton>
        <PanelButton>Go to Origin</PanelButton>
        <AlignRight htmlFor="Start From">Start From:</AlignRight>
        <Select id="Start From" options={['Current Position']} $ink="#5a1414" />
      </ButtonGrid>
      <LaserOptions>
        <OptionList>
          <Toggle text="Enable Rotary" tone="green" knob="right" />
          <Toggle text="Cut Selected Graphics" tone="red" />
          <Toggle text="Use Selection Origin" ink="#888" />
          <Toggle text="Optimize Cut Path" tone="green" knob="right" />
        </OptionList>
        <OptionSide>
          <JobOrigin>
            <span id="job-origin">Job Origin</span>
            <JobOriginGrid role="radiogroup" aria-labelledby="job-origin">
              {Array.from({ length: 9 }, (_, i) => (
                <JobRadio key={i} type="radio" name="job" aria-label={`Origin ${i + 1}`} defaultChecked={i === 8} />
              ))}
            </JobOriginGrid>
          </JobOrigin>
          <PanelButton><Icon name="lastPosition" size={16} />Show Last Position</PanelButton>
          <PanelButton>Optimization Settings</PanelButton>
        </OptionSide>
      </LaserOptions>
      <DeviceRow>
        <PanelButton>Devices</PanelButton>
        <Select id="Port" options={['COM1']} />
        <Select id="Device" options={['xTool-S1 （已导入） （已导入）']} />
      </DeviceRow>
      <BottomTabs>
        <TabButton $active $width="54px">Laser</TabButton>
        <TabButton $width="64px">Library</TabButton>
      </BottomTabs>
    </DockBody>
  </>
);

const App = () => (
  <>
    <GlobalStyle />
    <Window>
      <TitleBar>
        <Logo />
        <WindowTitle>&lt;untitled&gt; - LightBurn 1.4.00</WindowTitle>
        <WindowButtons>
          <PlainButton aria-label="Minimize"><svg width="12" height="12"><path d="M0 6.500h11" stroke="currentColor" /></svg></PlainButton>
          <PlainButton aria-label="Maximize"><svg width="12" height="12"><path d="M1.500 1.500h9v9h-9z" fill="none" stroke="currentColor" /></svg></PlainButton>
          <PlainButton aria-label="Close"><svg width="12" height="12"><path d="M1 1l10 10M11 1 1 11" stroke="currentColor" /></svg></PlainButton>
        </WindowButtons>
      </TitleBar>
      <MenuBar>
        {MENUS.map((menu) => <a key={menu} href={`#${menu}`}>{menu}</a>)}
      </MenuBar>
      <Toolbar>
        <Handle />
        <ToolGroups groups={MAIN_TOOLS} isDim={(name) => DIMMED.includes(name)} />
        <GroupEnd $before={4} />
        <Handle />
        <ToolGroups groups={ARRANGE_TOOLS} isDim={() => true} />
      </Toolbar>
      <Properties />
      <Workspace>
        <ToolStrip />
        <Canvas />
        <DockColumn>
          <ConsoleDock />
          <LaserDock />
        </DockColumn>
      </Workspace>
      <Palette>
        <Handle />
        {PALETTE.map(([fill, ink], index) => (
          <Swatch key={fill} $fill={fill} $ink={ink} $active={index === 0}>{String(index).padStart(2, '0')}</Swatch>
        ))}
        <Separator />
        <Swatch $fill="#e5662a" $ink="#222">T1</Swatch>
        <Swatch $fill="#228ecb">T2</Swatch>
      </Palette>
      <StatusBar>
        <StatusCell $width={59}><Toggle text="Move" tone="green" knob="right" /></StatusCell>
        <StatusCell $width={59}><Toggle text="Size" tone="green" knob="right" /></StatusCell>
        <StatusCell $width={70}><Toggle text="Rotate" tone="green" knob="right" /></StatusCell>
        <StatusCell $width={84} $after={3}><Toggle text="Shear" tone="green" knob="right" /></StatusCell>
        <StatusCell $width={415} $after={0}>x: 54.00, y: 252.00 mm</StatusCell>
        <StatusCell $grow $after={3}>&nbsp;</StatusCell>
        <ModeBadge>Enabled Mode(s): Rotary</ModeBadge>
        <ResizeGrip />
      </StatusBar>
    </Window>
  </>
);

export default App;
